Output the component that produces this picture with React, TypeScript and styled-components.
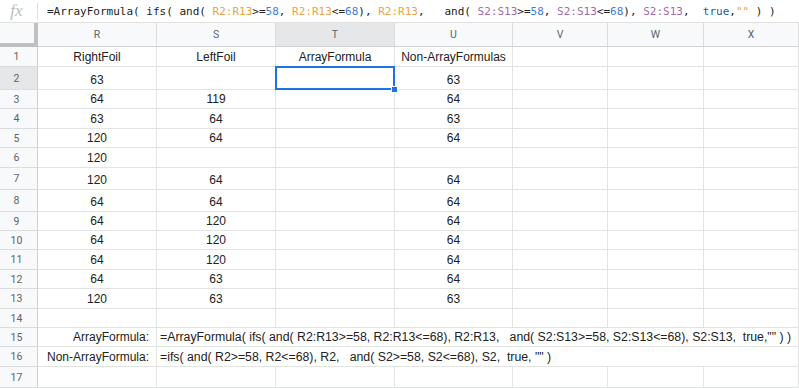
import styled, { createGlobalStyle } from "styled-components";

const GlobalStyle = createGlobalStyle`
	html, body {
		margin: 0;
		padding: 0;
		background: #ffffff;
	}
	* {
		box-sizing: border-box;
	}
`;

const COLUMNS = "38px 119px 119px 119px 118px 95px 96px 1fr";
const LINE = "#e2e3e3";

const Page = styled.div`
	width: 799px;
	height: 388px;
	overflow: hidden;
	background: #fff;
	font-family: "Liberation Sans", Arial, sans-serif;
`;

const FormulaBar = styled.div`
	display: flex;
	align-items: center;
	height: 23px;
	border-bottom: 1px solid #e1e1e1;
`;

const FxLabel = styled.div`
	width: 38px;
	height: 17px;
	display: flex;
	align-items: center;
	justify-content: center;
	border-right: 1px solid #e0e0e0;
	font-family: "Liberation Serif", "Times New Roman", serif;
	font-style: italic;
	font-size: 17px;
	color: #bdbdbd;
	padding-right: 4px;
`;

const FormulaText = styled.div`
	padding-left: 9px;
	font-family: "DejaVu Sans Mono", "Liberation Mono", monospace;
	font-size: 11px;
	color: #222;
	white-space: pre;
`;

const Token = styled.span<{ $kind?: "range" | "range2" | "num" | "bool" }>`
	color: ${({ $kind }) =>
		$kind === "range"
			? "#eda341"
			: $kind === "range2"
			? "#a06aab"
			: $kind === "num"
			? "#3f7bd9"
			: $kind === "bool"
			? "#1c56ae"
			: "#222"};
`;

const Row = styled.div<{ $h: number }>`
	display: grid;
	grid-template-columns: ${COLUMNS};
	height: ${({ $h }) => $h}px;
`;

const Corner = styled.div`
	background: #f8f9fa;
	border-right: 4px solid #c0c0c0;
	border-bottom: 4px solid #c0c0c0;
`;

const ColHeader = styled.div<{ $active?: boolean }>`
	display: flex;
	align-items: center;
	justify-content: center;
	background: ${({ $active }) => ($active ? "#e6e7e9" : "#f8f9fa")};
	border-right: 1px solid #dadcdd;
	border-bottom: 1px solid #cfd1d2;
	font-family: Roboto, "Liberation Sans", sans-serif;
	font-size: 10.5px;
	color: #5f6368;
`;

const RowHeader = styled.div<{ $active?: boolean }>`
	display: flex;
	align-items: center;
	justify-content: center;
	padding-right: 4px;
	background: ${({ $active }) => ($active ? "#e6e7e9" : "#f8f9fa")};
	border-right: 1px solid #cfd1d2;
	border-bottom: 1px solid #dadcdd;
	font-family: Roboto, "Liberation Sans", sans-serif;
	font-size: 10.5px;
	color: #5f6368;
`;

const Cell = styled.div<{
	$align?: "left" | "center" | "right";
	$span?: number;
	$wide?: boolean;
}>`
	position: relative;
	display: flex;
	align-items: flex-end;
	justify-content: ${({ $align }) =>
		$align === "left" ? "flex-start" : $align === "right" ? "flex-end" : "center"};
	grid-column: span ${({ $span }) => $span ?? 1};
	padding: 0 ${({ $align }) => ($align === "right" ? "7px" : "3px")} 2px 3px;
	border-right: 1px solid ${LINE};
	border-bottom: 1px solid ${LINE};
	font-size: ${({ $wide }) => ($wide ? "12.3px" : "12px")};
	color: #222;
	white-space: pre;
	overflow: visible;
`;

const Selection = styled.div`
	position: absolute;
	left: -1px;
	top: -1px;
	right: -1px;
	bottom: -1px;
	border: 2px solid #1a73e8;
	z-index: 2;
`;

const Handle = styled.div`
	position: absolute;
	right: -5px;
	bottom: -5px;
	width: 7px;
	height: 7px;
	background: #1a73e8;
	border: 1px solid #fff;
`;

const letters = ["R", "S", "T", "U", "V", "W", "X"];

const heights = [20, 23, 19, 20, 19, 20, 22, 22, 19, 19, 20, 19, 20, 19, 19, 20, 21];

const data: string[][] = [
	["RightFoil", "LeftFoil", "ArrayFormula", "Non-ArrayFormulas"],
	["63", "", "", "63"],
	["64", "119", "", "64"],
	["63", "64", "", "63"],
	["120", "64", "", "64"],
	["120", "", "", ""],
	["120", "64", "", "64"],
	["64", "64", "", "64"],
	["64", "120", "", "64"],
	["64", "120", "", "64"],
	["64", "120", "", "64"],
	["64", "63", "", "64"],
	["120", "63", "", "63"],
	["", "", "", ""],
];

const notes = [
	{
		label: "ArrayFormula:",
		formula:
			'=ArrayFormula( ifs( and( R2:R13>=58, R2:R13<=68), R2:R13,   and( S2:S13>=58, S2:S13<=68), S2:S13,  true,"" ) )',
	},
	{
		label: "Non-ArrayFormula:",
		formula: '=ifs( and( R2>=58, R2<=68), R2,   and( S2>=58, S2<=68), S2,  true, "" )',
	},
];

const App = () => {
	return (
		<Page>
			<GlobalStyle />
			<FormulaBar>
				<FxLabel>fx</FxLabel>
				<FormulaText>
					=ArrayFormula( ifs( and( <Token $kind="range">R2:R13</Token>&gt;=
					<Token $kind="num">58</Token>, <Token $kind="range">R2:R13</Token>&lt;=
					<Token $kind="num">68</Token>), <Token $kind="range">R2:R13</Token>,{"   "}and({" "}
					<Token $kind="range2">S2:S13</Token>&gt;=<Token $kind="num">58</Token>,{" "}
					<Token $kind="range2">S2:S13</Token>&lt;=<Token $kind="num">68</Token>),{" "}
					<Token $kind="range2">S2:S13</Token>,{"  "}
					<Token $kind="bool">true</Token>,<Token $kind="range">""</Token> ) )
				</FormulaText>
			</FormulaBar>

			<Row $h={24}>
				<Corner />
				{letters.map((l) => (
					<ColHeader key={l} $active={l === "T"}>
						{l}
					</ColHeader>
				))}
			</Row>

			{data.map((cells, i) => (
				<Row key={i} $h={heights[i]}>
					<RowHeader $active={i === 1}>{i + 1}</RowHeader>
					{cells.map((v, j) => (
						<Cell key={j}>
							{v}
							{i === 1 && j === 2 && (
								<Selection>
									<Handle />
								</Selection>
							)}
						</Cell>
					))}
					<Cell />
					<Cell />
					<Cell />
				</Row>
			))}

			{notes.map((n, k) => (
				<Row key={n.label} $h={heights[14 + k]}>
					<RowHeader>{15 + k}</RowHeader>
					<Cell $align="right">{n.label}</Cell>
					<Cell $align="left" $span={6} $wide>
						{n.formula}
					</Cell>
				</Row>
			))}

			<Row $h={heights[16]}>
				<RowHeader>17</RowHeader>
				{letters.map((l) => (
					<Cell key={l} />
				))}
			</Row>
		</Page>
	);
};

export default App;
